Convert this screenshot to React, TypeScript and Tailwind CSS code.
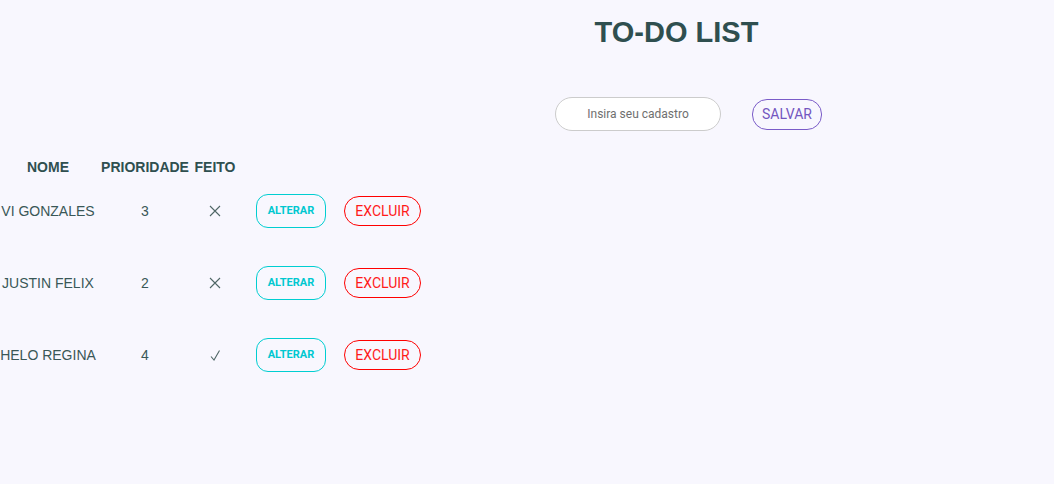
const tasks = [
  { id: 1, nome: "VI GONZALES", prioridade: 3, feito: false },
  { id: 2, nome: "JUSTIN FELIX", prioridade: 2, feito: false },
  { id: 3, nome: "HELO REGINA", prioridade: 4, feito: true },
];

const CrossIcon = () => (
  <svg width="12" height="12" viewBox="0 0 12 12" fill="none" stroke="#4f6666" strokeWidth="1.1">
    <path d="M1 1L11 11M11 1L1 11" />
  </svg>
);

const CheckIcon = () => (
  <svg width="11" height="11" viewBox="0 0 11 11" fill="none" stroke="#4f6666" strokeWidth="1.1">
    <path d="M1 6.5L4 10L9.5 0.5" />
  </svg>
);

export default function App() {
  return (
    <div className="h-[484px] w-full overflow-hidden bg-[#f8f7fe] [font-family:'Liberation_Sans',Arial,sans-serif] text-[#2f4f4f]">
      <header className="ml-[299px] flex flex-col items-center pt-[16px]">
        <h1 className="text-[29px] font-bold leading-[33px] text-[#2f4f4f]">TO-DO LIST</h1>
      </header>

      <div className="mt-[48px] flex items-center pl-[555px]">
        <input
          type="text"
          placeholder="Insira seu cadastro"
          className="h-[34px] w-[166px] rounded-full border border-[#cccccc] bg-white text-center text-[12px] [font-family:Roboto,sans-serif] placeholder:text-[#6f6f6f] outline-none"
        />
        <button className="ml-[31px] h-[31px] w-[70px] rounded-[15px] border border-[#7a5cc8] text-[14px] text-[#7356c0] [font-family:Roboto,sans-serif]">
          SALVAR
        </button>
      </div>

      <div className="mt-[28px]">
        <div className="flex h-[16px] items-center text-[14px] font-bold leading-[16px]">
          <div className="w-[96px] text-center">NOME</div>
          <div className="ml-[4px] w-[90px] text-center">PRIORIDADE</div>
          <div className="ml-[4px] w-[42px] text-center">FEITO</div>
        </div>

        {tasks.map((task) => (
          <div key={task.id} className="flex h-[72px] items-center text-[14px] leading-[16px] text-[#3a5757]">
            <div className="w-[96px] whitespace-nowrap text-center">{task.nome}</div>
            <div className="ml-[4px] w-[90px] text-center">{task.prioridade}</div>
            <div className="ml-[4px] flex w-[42px] justify-center">
              {task.feito ? <CheckIcon /> : <CrossIcon />}
            </div>
            <button className="ml-[20px] h-[34px] w-[70px] rounded-[12px] border border-[#00ced1] text-[11px] font-bold text-[#00c8d0] [font-family:Roboto,sans-serif]">
              ALTERAR
            </button>
            <button className="ml-[18px] h-[30px] w-[77px] rounded-full border border-[#ff0000] text-[14px] text-[#ff1a1a] [font-family:Roboto,sans-serif]">
              EXCLUIR
            </button>
          </div>
        ))}
      </div>
    </div>
  );
}
